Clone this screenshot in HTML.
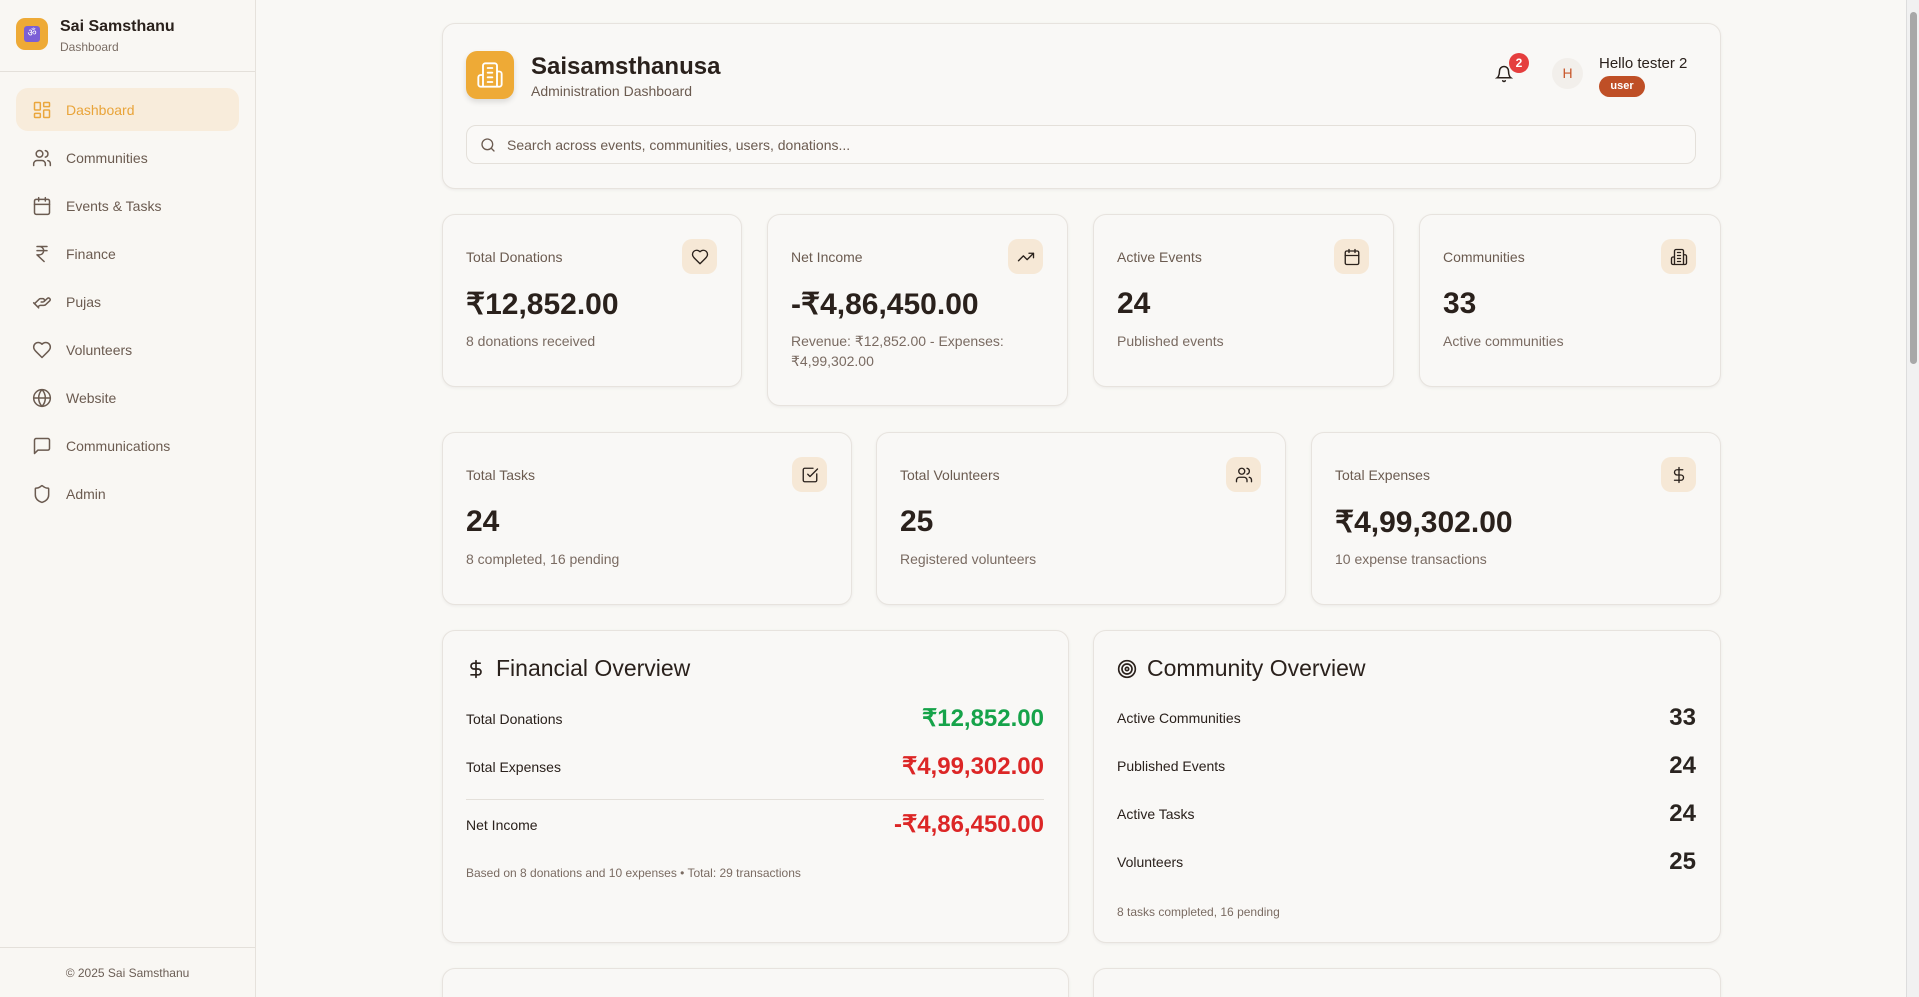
<!DOCTYPE html>
<html><head><meta charset="utf-8"><style>
*{box-sizing:border-box;margin:0;padding:0}
html{width:1919px;height:997px;overflow:hidden}
body{width:1919px;height:997px;overflow:hidden;background:#f9f8f5;font-family:"Liberation Sans",sans-serif;color:#2a2420;position:relative}
.wrap{position:absolute;left:0;top:0;width:1919px;height:997px;overflow:hidden}
.sb{position:absolute;left:0;top:0;width:256px;height:997px;border-right:1px solid #e6e2dc;background:#f9f7f3}
.sbh{height:72px;border-bottom:1px solid #e4e0da;position:relative}
.logo{position:absolute;left:16px;top:18px;width:32px;height:32px;border-radius:9px;background:#eeaa36;display:flex;align-items:center;justify-content:center}
.logo span{width:16px;height:16px;background:#7b5fd6;border-radius:3px;color:#fff;font-size:10px;text-align:center;line-height:16px}
.t1{position:absolute;left:60px;top:18px;font-size:16px;font-weight:bold;color:#2a211c}
.t2{position:absolute;left:60px;top:40px;font-size:12px;color:#7a6d64}
.nav{position:absolute;left:16px;top:88px;width:223px}
.ni{height:43px;margin-bottom:5px;display:flex;align-items:center;padding-left:16px;font-size:14px;color:#6b5b50;border-radius:12px}
.ni svg{width:20px;height:20px;margin-right:14px;fill:none;stroke:#6b5b50;stroke-width:1.8;stroke-linecap:round;stroke-linejoin:round}
.ni.a{background:#f8ecdb;color:#e9a43a}
.ni.a svg{stroke:#eaa63c}
.sbf{position:absolute;left:0;bottom:0;width:255px;height:50px;border-top:1px solid #e4e0da;font-size:12px;color:#6b5e55;text-align:center;line-height:50px}
.card{position:absolute;background:#f9f8f6;border:1px solid #e7e3de;border-radius:13px;box-shadow:0 1px 3px rgba(0,0,0,.06)}
.lbl{position:absolute;left:23px;top:34px;font-size:14px;color:#6b5b50}
.val{position:absolute;left:23px;top:72px;font-size:30px;font-weight:bold;color:#2a211c}
.sub{position:absolute;left:23px;top:116px;font-size:14px;color:#7a6b62;line-height:20px}
.ib{position:absolute;right:24px;top:24px;width:35px;height:35px;border-radius:10px;background:#f6e8d6;display:flex;align-items:center;justify-content:center}
.ib svg{width:18px;height:18px;fill:none;stroke:#2a211c;stroke-width:1.8;stroke-linecap:round;stroke-linejoin:round}
.h2{position:absolute;left:23px;top:24px;font-size:23px;color:#2a211c;display:flex;align-items:center}
.h2 svg{width:20px;height:20px;margin-right:10px;fill:none;stroke:#2a211c;stroke-width:2;stroke-linecap:round}
.row{position:absolute;left:23px;right:24px;display:flex;justify-content:space-between;align-items:center}
.row .k{font-size:14px;color:#2a211c}
.row .v{font-size:24px;font-weight:bold}
.foot{position:absolute;left:23px;font-size:12px;color:#7a6b62}
.scroll{position:absolute;right:0;top:0;width:13px;height:997px;background:#f1f1f1;border-left:1px solid #ddd}
.thumb{position:absolute;left:3px;top:12px;width:7px;height:352px;background:#a8a8a8;border-radius:4px}
</style></head><body><div class="wrap">
<div class="sb">
 <div class="sbh"><div class="logo"><span>ॐ</span></div><div class="t1">Sai Samsthanu</div><div class="t2">Dashboard</div></div>
 <div class="nav">
  <div class="ni a"><svg viewBox="0 0 24 24"><rect x="3" y="3" width="7" height="9" rx="1"/><rect x="14" y="3" width="7" height="5" rx="1"/><rect x="14" y="12" width="7" height="9" rx="1"/><rect x="3" y="16" width="7" height="5" rx="1"/></svg>Dashboard</div>
  <div class="ni"><svg viewBox="0 0 24 24"><circle cx="9" cy="7" r="4"/><path d="M2 21v-2a4 4 0 0 1 4-4h6a4 4 0 0 1 4 4v2M16 3.1a4 4 0 0 1 0 7.8M22 21v-2a4 4 0 0 0-3-3.9"/></svg>Communities</div>
  <div class="ni"><svg viewBox="0 0 24 24"><rect x="3" y="4" width="18" height="18" rx="2"/><path d="M16 2v4M8 2v4M3 10h18"/></svg>Events &amp; Tasks</div>
  <div class="ni"><svg viewBox="0 0 24 24"><path d="M6 3h12M6 8h12M6 13l8.5 8M6 13h3a5 5 0 0 0 0-10"/></svg>Finance</div>
  <div class="ni"><svg viewBox="0 0 24 24"><path d="M11 12h2a2 2 0 1 0 0-4h-3c-.6 0-1.1.2-1.4.6L3 14M7 18l1.6-1.4c.3-.4.8-.6 1.4-.6h4c1.1 0 2.1-.4 2.8-1.2l4.6-4.4a2 2 0 0 0-2.8-2.8l-4.2 3.9M2 13l6 6"/></svg>Pujas</div>
  <div class="ni"><svg viewBox="0 0 24 24"><path d="M19 14c1.5-1.5 3-3.2 3-5.5A5.5 5.5 0 0 0 16.5 3c-1.8 0-3 .5-4.5 2-1.5-1.5-2.7-2-4.5-2A5.5 5.5 0 0 0 2 8.5c0 2.3 1.5 4 3 5.5l7 7Z"/></svg>Volunteers</div>
  <div class="ni"><svg viewBox="0 0 24 24"><circle cx="12" cy="12" r="10"/><path d="M12 2a14.5 14.5 0 0 0 0 20 14.5 14.5 0 0 0 0-20M2 12h20"/></svg>Website</div>
  <div class="ni"><svg viewBox="0 0 24 24"><path d="M21 15a2 2 0 0 1-2 2H7l-4 4V5a2 2 0 0 1 2-2h14a2 2 0 0 1 2 2z"/></svg>Communications</div>
  <div class="ni"><svg viewBox="0 0 24 24"><path d="M20 13c0 5-3.5 7.5-7.7 9a1 1 0 0 1-.7 0C7.5 20.5 4 18 4 13V6a1 1 0 0 1 1-1c2 0 4.5-1.2 6.2-2.7a1.2 1.2 0 0 1 1.5 0C14.5 3.8 17 5 19 5a1 1 0 0 1 1 1z"/></svg>Admin</div>
 </div>
 <div class="sbf">© 2025 Sai Samsthanu</div>
</div>

<div class="card" style="left:442px;top:23px;width:1279px;height:166px">
 <div style="position:absolute;left:23px;top:27px;width:48px;height:48px;border-radius:11px;background:#eeaa36;box-shadow:0 3px 6px rgba(0,0,0,.12);display:flex;align-items:center;justify-content:center"><svg viewBox="0 0 24 24" width="28" height="28" fill="none" stroke="#fff" stroke-width="1.6" stroke-linecap="round"><path d="M6 22V4a2 2 0 0 1 2-2h8a2 2 0 0 1 2 2v18ZM6 12H4a2 2 0 0 0-2 2v6a2 2 0 0 0 2 2h2M18 9h2a2 2 0 0 1 2 2v9a2 2 0 0 1-2 2h-2M10 6h4M10 10h4M10 14h4M10 18h4"/></svg></div>
 <div style="position:absolute;left:88px;top:29px;font-size:24px;font-weight:bold;color:#2a211c">Saisamsthanusa</div>
 <div style="position:absolute;left:88px;top:59px;font-size:14px;color:#6b5b50">Administration Dashboard</div>
 <svg style="position:absolute;left:1052px;top:41px" width="18" height="18" viewBox="0 0 24 24" fill="none" stroke="#2a211c" stroke-width="2" stroke-linecap="round"><path d="M6 8a6 6 0 0 1 12 0c0 7 3 9 3 9H3s3-2 3-9M10.3 21a1.9 1.9 0 0 0 3.4 0"/></svg>
 <div style="position:absolute;left:1066px;top:29px;width:20px;height:20px;border-radius:50%;background:#e53e3e;color:#fff;font-size:12px;font-weight:bold;text-align:center;line-height:20px">2</div>
 <div style="position:absolute;left:1109px;top:34px;width:31px;height:31px;border-radius:50%;background:#f2efeb;color:#c8562a;font-size:14px;text-align:center;line-height:31px">H</div>
 <div style="position:absolute;left:1156px;top:31px;font-size:15px;color:#2a211c">Hello tester 2</div>
 <div style="position:absolute;left:1156px;top:52px;width:46px;height:21px;border-radius:11px;background:#bf4f26;color:#fff;font-size:11px;font-weight:bold;text-align:center;line-height:21px">user</div>
 <div style="position:absolute;left:23px;top:101px;width:1230px;height:39px;border:1px solid #e4e0da;border-radius:10px;background:#faf9f7">
  <svg style="position:absolute;left:13px;top:11px" width="16" height="16" viewBox="0 0 24 24" fill="none" stroke="#6b5b50" stroke-width="2" stroke-linecap="round"><circle cx="11" cy="11" r="8"/><path d="m21 21-4.3-4.3"/></svg>
  <div style="position:absolute;left:40px;top:11px;font-size:14px;color:#6b5b50">Search across events, communities, users, donations...</div>
 </div>
</div>

<div class="card" style="left:442px;top:214px;width:300px;height:173px"><div class="lbl">Total Donations</div><div class="ib"><svg viewBox="0 0 24 24"><path d="M19 14c1.5-1.5 3-3.2 3-5.5A5.5 5.5 0 0 0 16.5 3c-1.8 0-3 .5-4.5 2-1.5-1.5-2.7-2-4.5-2A5.5 5.5 0 0 0 2 8.5c0 2.3 1.5 4 3 5.5l7 7Z"/></svg></div><div class="val">₹12,852.00</div><div class="sub">8 donations received</div></div>
<div class="card" style="left:767px;top:214px;width:301px;height:192px"><div class="lbl">Net Income</div><div class="ib"><svg viewBox="0 0 24 24"><path d="m22 7-8.5 8.5-5-5L2 17M16 7h6v6"/></svg></div><div class="val">-₹4,86,450.00</div><div class="sub">Revenue: ₹12,852.00 - Expenses:<br>₹4,99,302.00</div></div>
<div class="card" style="left:1093px;top:214px;width:301px;height:173px"><div class="lbl">Active Events</div><div class="ib"><svg viewBox="0 0 24 24"><rect x="3" y="4" width="18" height="18" rx="2"/><path d="M16 2v4M8 2v4M3 10h18"/></svg></div><div class="val">24</div><div class="sub">Published events</div></div>
<div class="card" style="left:1419px;top:214px;width:302px;height:173px"><div class="lbl">Communities</div><div class="ib"><svg viewBox="0 0 24 24"><path d="M6 22V4a2 2 0 0 1 2-2h8a2 2 0 0 1 2 2v18ZM6 12H4a2 2 0 0 0-2 2v6a2 2 0 0 0 2 2h2M18 9h2a2 2 0 0 1 2 2v9a2 2 0 0 1-2 2h-2M10 6h4M10 10h4M10 14h4M10 18h4"/></svg></div><div class="val">33</div><div class="sub">Active communities</div></div>

<div class="card" style="left:442px;top:432px;width:410px;height:173px"><div class="lbl">Total Tasks</div><div class="ib"><svg viewBox="0 0 24 24"><path d="M21 10.5V19a2 2 0 0 1-2 2H5a2 2 0 0 1-2-2V5a2 2 0 0 1 2-2h11M9 11l3 3L22 4"/></svg></div><div class="val">24</div><div class="sub">8 completed, 16 pending</div></div>
<div class="card" style="left:876px;top:432px;width:410px;height:173px"><div class="lbl">Total Volunteers</div><div class="ib"><svg viewBox="0 0 24 24"><circle cx="9" cy="7" r="4"/><path d="M2 21v-2a4 4 0 0 1 4-4h6a4 4 0 0 1 4 4v2M16 3.1a4 4 0 0 1 0 7.8M22 21v-2a4 4 0 0 0-3-3.9"/></svg></div><div class="val">25</div><div class="sub">Registered volunteers</div></div>
<div class="card" style="left:1311px;top:432px;width:410px;height:173px"><div class="lbl">Total Expenses</div><div class="ib"><svg viewBox="0 0 24 24"><path d="M12 2v20M17 5H9.5a3.5 3.5 0 0 0 0 7h5a3.5 3.5 0 0 1 0 7H6"/></svg></div><div class="val">₹4,99,302.00</div><div class="sub">10 expense transactions</div></div>

<div class="card" style="left:442px;top:630px;width:627px;height:313px">
 <div class="h2"><svg viewBox="0 0 24 24"><path d="M12 2v20M17 5H9.5a3.5 3.5 0 0 0 0 7h5a3.5 3.5 0 0 1 0 7H6"/></svg>Financial Overview</div>
 <div class="row" style="top:73px"><span class="k">Total Donations</span><span class="v" style="color:#16a34a">₹12,852.00</span></div>
 <div class="row" style="top:121px"><span class="k">Total Expenses</span><span class="v" style="color:#dc2626">₹4,99,302.00</span></div>
 <div style="position:absolute;left:23px;right:24px;top:168px;border-top:1px solid #e4e0da"></div>
 <div class="row" style="top:179px"><span class="k">Net Income</span><span class="v" style="color:#dc2626">-₹4,86,450.00</span></div>
 <div class="foot" style="top:235px">Based on 8 donations and 10 expenses • Total: 29 transactions</div>
</div>
<div class="card" style="left:1093px;top:630px;width:628px;height:313px">
 <div class="h2"><svg viewBox="0 0 24 24"><circle cx="12" cy="12" r="10"/><circle cx="12" cy="12" r="6"/><circle cx="12" cy="12" r="2"/></svg>Community Overview</div>
 <div class="row" style="top:73px"><span class="k">Active Communities</span><span class="v">33</span></div>
 <div class="row" style="top:121px"><span class="k">Published Events</span><span class="v">24</span></div>
 <div class="row" style="top:169px"><span class="k">Active Tasks</span><span class="v">24</span></div>
 <div class="row" style="top:217px"><span class="k">Volunteers</span><span class="v">25</span></div>
 <div class="foot" style="top:274px">8 tasks completed, 16 pending</div>
</div>
<div class="card" style="left:442px;top:968px;width:627px;height:60px"></div>
<div class="card" style="left:1093px;top:968px;width:628px;height:60px"></div>
<div class="scroll"><div class="thumb"></div></div>
</div></body></html>
